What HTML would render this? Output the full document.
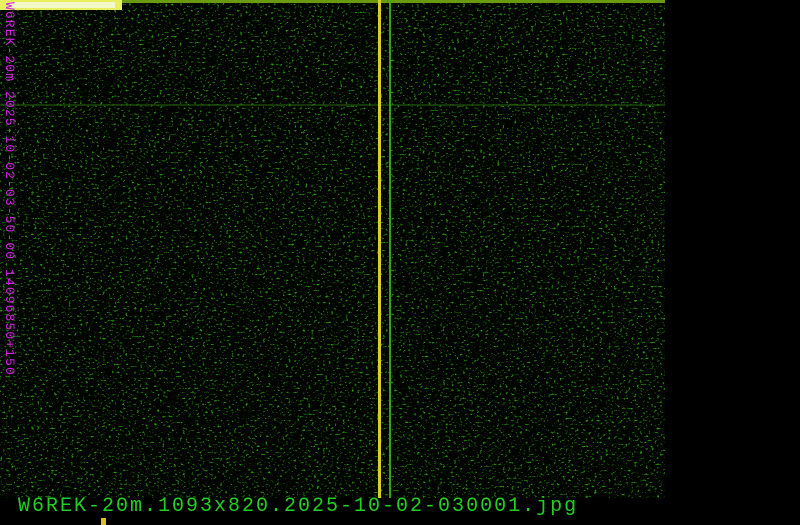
<!DOCTYPE html>
<html><head><style>
body{margin:0;width:800px;height:525px;background:#000;overflow:hidden;position:relative;font-family:"Liberation Mono",monospace}
svg{position:absolute;left:0;top:0}
.v{position:absolute;left:16px;top:2px;transform-origin:0 0;transform:rotate(90deg);color:#d020e0;font-size:13px;letter-spacing:1.1px;white-space:nowrap;line-height:14px}
.b{position:absolute;left:18px;top:495px;color:#20d020;font-size:20px;letter-spacing:2px;white-space:nowrap;line-height:24px}
</style></head><body>
<svg width="800" height="525">
<defs>
<filter id="n2" x="0" y="0" width="100%" height="100%" color-interpolation-filters="sRGB">
<feTurbulence type="fractalNoise" baseFrequency="0.35 0.5" numOctaves="2" seed="5"/>
<feColorMatrix type="matrix" values="0 0 0 0 0.15  0 0 0 0 0.6  0 0 0 0 0.04  1 0 0 0 0"/>
<feComponentTransfer><feFuncA type="linear" slope="7" intercept="-4.3"/></feComponentTransfer>
<feComposite operator="in" in2="SourceGraphic"/>
</filter>
</defs>
<rect width="665" height="498" fill="#010400"/>
<rect width="665" height="498" fill="#fff" filter="url(#n2)"/>
<rect x="0" y="104" width="665" height="2" fill="#2a6a0a" opacity="0.5"/>
<rect x="0" y="0" width="665" height="3" fill="#6a9a10"/>
<rect x="0" y="0" width="122" height="10" fill="#e8f060"/>
<rect x="10" y="2" width="105" height="6" fill="#f4f8c8"/>
<rect x="378" y="0" width="3" height="498" fill="#d8d020"/>
<rect x="389" y="0" width="2" height="498" fill="#40b018" opacity="0.9"/>
<rect x="101" y="518" width="5" height="7" fill="#d8c020"/>
</svg>
<div class="v">W6REK-20m 2025-10-02-03-50-00 14096850+150</div>
<div class="b">W6REK-20m.1093x820.2025-10-02-030001.jpg</div>
</body></html>
